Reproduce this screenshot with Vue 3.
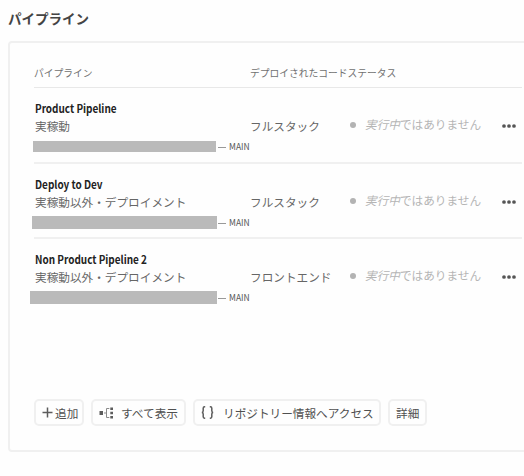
<script setup>
const pipelines = [
  { name: 'Product Pipeline', type: '実稼動', code: 'フルスタック', variant: 'first' },
  { name: 'Deploy to Dev', type: '実稼動以外・デプロイメント', code: 'フルスタック', variant: 'second' },
  { name: 'Non Product Pipeline 2', type: '実稼動以外・デプロイメント', code: 'フロントエンド', variant: 'third' },
]
</script>

<template>
  <main class="page">
    <h1>パイプライン</h1>
    <section class="card">
      <div class="grid head">
        <span>パイプライン</span>
        <span class="head-wide">デプロイされたコードステータス</span>
      </div>
      <div v-for="p in pipelines" :key="p.name" class="grid row" :class="p.variant">
        <div class="info">
          <strong>{{ p.name }}</strong>
          <span class="type">{{ p.type }}</span>
          <div class="branch"><i class="mask"></i><i class="dash"></i><span>MAIN</span></div>
        </div>
        <span class="code">{{ p.code }}</span>
        <div class="status"><i class="dot"></i><span><em>実行中</em>ではありません</span></div>
        <svg class="more" width="14" height="4" viewBox="0 0 14 4">
          <circle cx="2" cy="2" r="1.85" /><circle cx="7" cy="2" r="1.85" /><circle cx="12" cy="2" r="1.85" />
        </svg>
      </div>
      <div class="actions">
        <button class="add">
          <svg width="11" height="11" viewBox="0 0 11 11"><path d="M5.5 .5v10M.5 5.5h10" stroke="#5c5c5c" stroke-width="1.5" /></svg>
          <span>追加</span>
        </button>
        <button class="all">
          <svg width="15" height="12" viewBox="0 0 15 12">
            <path d="M.5 4h3.5v4H.5zM11.3 .5h2.7v2.5h-2.7zM11.3 4.7h2.7v2.5h-2.7zM11.3 8.9h2.7v2.5h-2.7z" fill="#5c5c5c" />
            <path d="M5 6h2.5M10.3 1.5H7.5v9h2.8" fill="none" stroke="#8a8a8a" stroke-width="1" />
          </svg>
          <span>すべて表示</span>
        </button>
        <button class="repo">
          <svg width="13" height="13" viewBox="0 0 13 13" fill="none" stroke="#5c5c5c" stroke-width="1.5">
            <path d="M4.2 .8H3.6Q2.2 .8 2.2 2.2V4.8Q2.2 6.4 .8 6.4Q2.2 6.4 2.2 8V10.8Q2.2 12.2 3.6 12.2H4.2M8.8 .8H9.4Q10.8 .8 10.8 2.2V4.8Q10.8 6.4 12.2 6.4Q10.8 6.4 10.8 8V10.8Q10.8 12.2 9.4 12.2H8.8" />
          </svg>
          <span>リポジトリー情報へアクセス</span>
        </button>
        <button class="detail"><span>詳細</span></button>
      </div>
    </section>
  </main>
</template>

<style>
body { background: #fefefe; overflow: hidden; }
</style>
<style scoped>
* { box-sizing: border-box; }
.page {
  width: 524px;
  height: 476px;
  overflow: hidden;
  font-family: "Noto Sans CJK JP", sans-serif;
  color: #666;
  white-space: nowrap;
}
h1 {
  margin: 0;
  height: 41px;
  padding: 9px 0 0 8px;
  font-size: 13.5px;
  line-height: 19px;
  font-weight: 700;
  color: #444;
}
.card {
  width: 530px;
  height: 411px;
  margin-left: 8px;
  padding: 0 0 0 24px;
  border: 2px solid #f0f0f0;
  border-radius: 4px;
  display: flex;
  flex-direction: column;
}
.grid {
  width: 488px;
  display: grid;
  grid-template-columns: 216px 100px 152px 20px;
  border-bottom: 2px solid #f0f0f0;
}
.head {
  height: 45px;
  padding-top: 23px;
  font-size: 9.75px;
  line-height: 14px;
  color: #707070;
  border-bottom: 1px solid #e8e8e8;
}
.head-wide { grid-column: 2 / 5; }
.row { height: 75px; }
.row.first { height: 76px; }
.row.third { border-bottom: 0; }
.info { display: flex; flex-direction: column; padding-top: 11px; }
strong {
  padding-left: 1px;
  font-size: 11.5px;
  line-height: 18px;
  font-weight: 700;
  color: #222;
  transform: scaleX(.865);
  transform-origin: 1px 50%;
}
.type { padding-left: 1px; font-size: 11.65px; line-height: 18px; }
.branch {
  display: flex;
  align-items: center;
  height: 13px;
  margin: 5px 0 0 -2px;
  font-size: 8.5px;
  line-height: 13px;
  color: #555;
}
.mask { width: 185px; height: 13px; background: #bababa; }
.first .mask { width: 183px; height: 11px; }
.first .branch { margin-left: -1px; }
.third .branch { margin-left: -4px; }
.third .mask { width: 187px; }
.dash { width: 8px; height: 1px; margin: 2px 3px 0 1px; background: #999; }
.first .dash { margin-left: 2px; }
.code { padding-top: 29px; font-size: 11.65px; line-height: 18px; }
.status {
  display: flex;
  align-items: center;
  height: 18px;
  margin-top: 28px;
  font-size: 11.65px;
  line-height: 18px;
  color: #b5b5b5;
}
.status span { padding-bottom: 2px; }
.dot { width: 6px; height: 6px; margin-right: 9px; border-radius: 50%; background: #b3b3b3; }
.more { margin: 36px 0 0 0; fill: #555; }
.actions { display: flex; gap: 7px; margin-top: auto; padding-bottom: 24px; }
button {
  display: flex;
  align-items: center;
  height: 27px;
  padding: 0 0 0 6px;
  border: 2px solid #f0f0f0;
  border-radius: 5px;
  background: #fefefe;
  font: 11.65px/18px "Noto Sans CJK JP", sans-serif;
  color: #505050;
}
.add { width: 50px; gap: 2px; }
.all { width: 95px; gap: 7px; }
.repo { width: 188px; gap: 9px; }
.detail { width: 39px; }
</style>
